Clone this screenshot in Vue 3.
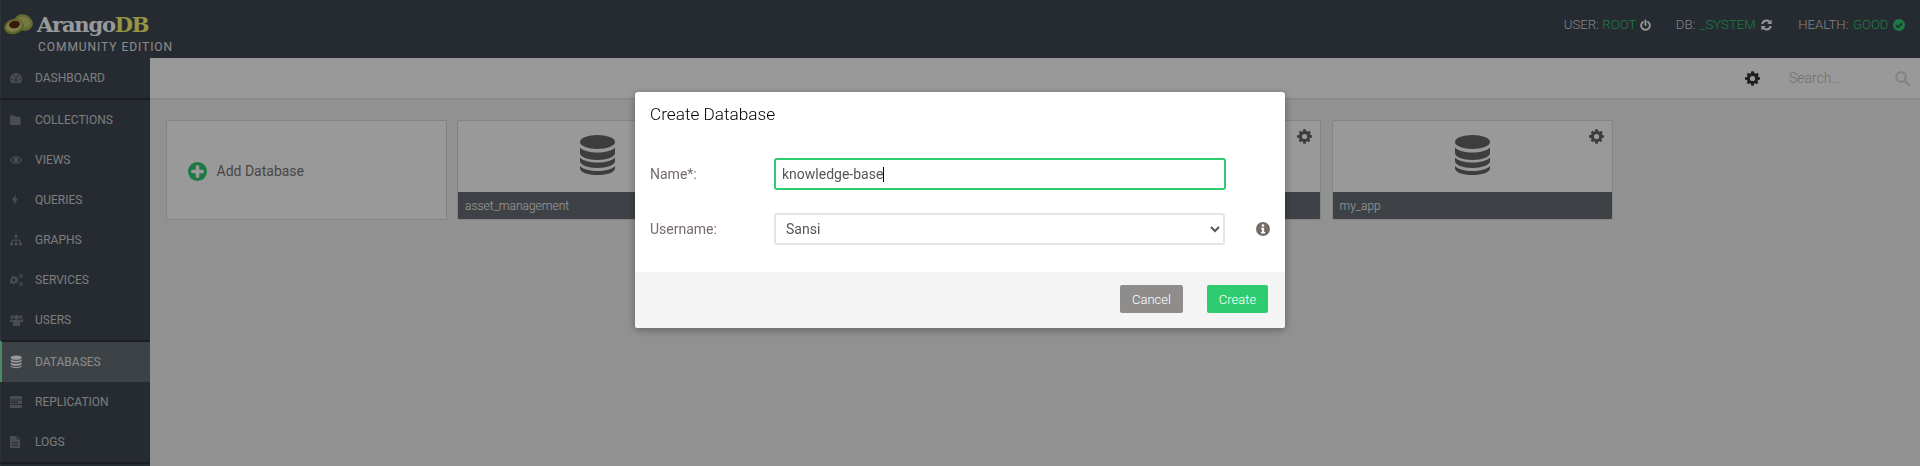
<script setup>
import { ref } from 'vue';

const menuTop = [
  { label: 'COLLECTIONS', icon: 'folder' },
  { label: 'VIEWS', icon: 'eye' },
  { label: 'QUERIES', icon: 'bolt' },
  { label: 'GRAPHS', icon: 'sitemap' },
  { label: 'SERVICES', icon: 'cogs' },
  { label: 'USERS', icon: 'users' },
];

const menuBottom = [
  { label: 'REPLICATION', icon: 'server' },
  { label: 'LOGS', icon: 'file' },
];

// only the first and last names can be read, the others sit behind the modal
const databases = ['asset_management', '', '', 'my_app'];

const dbName = ref('knowledge-base');
const username = ref('Sansi');

const gearPath = 'M14.3 8.9l-1.5-.3c-.1-.4-.3-.8-.5-1.2l.9-1.3-1.6-1.6-1.3.9c-.4-.2-.8-.4-1.2-.5L8.3 3H6l-.3 1.9c-.4.1-.8.3-1.2.5l-1.3-.9-1.6 1.6.9 1.3c-.2.4-.4.8-.5 1.2L0 8.9v2.2l2 .3c.1.4.3.8.5 1.2l-.9 1.3 1.6 1.6 1.3-.9c.4.2.8.4 1.2.5L6 17h2.3l.3-1.9c.4-.1.8-.3 1.2-.5l1.3.9 1.6-1.6-.9-1.3c.2-.4.4-.8.5-1.2l1.9-.3V8.9zM7.2 12.5a2.5 2.5 0 1 1 0-5 2.5 2.5 0 0 1 0 5z';
</script>

<template>
  <div class="app">
    <header class="topbar">
      <div class="brand">
        <svg class="avocado" viewBox="0 0 30 22" width="30" height="22">
          <ellipse cx="19.5" cy="9.5" rx="9.5" ry="8" fill="#a8b44e" transform="rotate(25 19.5 9.5)" />
          <ellipse cx="20" cy="9" rx="6.5" ry="5" fill="#c8cc74" transform="rotate(25 20 9)" />
          <ellipse cx="10" cy="13.5" rx="10" ry="7.5" fill="#9aa846" transform="rotate(-15 10 13.5)" />
          <ellipse cx="10" cy="13" rx="8" ry="5.5" fill="#d4d880" transform="rotate(-15 10 13)" />
          <ellipse cx="10.5" cy="11.5" rx="5.5" ry="3.8" fill="#5e2c12" transform="rotate(-10 10.5 11.5)" />
        </svg>
        <div class="brand-text">
          <div class="wordmark">Arango<span class="wordmark-db">DB</span></div>
          <div class="edition">COMMUNITY EDITION</div>
        </div>
      </div>
      <div class="status">
        <div class="status-item status-user">
          <span>USER:</span><span class="good">ROOT</span>
          <svg width="11" height="12" viewBox="0 0 12 12" fill="none" stroke="#fff" stroke-width="2" stroke-linecap="round">
            <path d="M3.2 2.6a4.8 4.8 0 1 0 5.6 0" />
            <path d="M6 1v5" />
          </svg>
        </div>
        <div class="status-item">
          <span>DB:</span><span class="good">_SYSTEM</span>
          <svg width="13" height="12" viewBox="0 0 13 12" fill="#fff">
            <path d="M1.2 5a5.4 5.4 0 0 1 9-3.1L11.6.6V5H7.2l1.6-1.6A3.5 3.5 0 0 0 3.2 5z" />
            <path d="M11.8 7a5.4 5.4 0 0 1-9 3.1L1.4 11.4V7h4.4L4.2 8.6A3.5 3.5 0 0 0 9.8 7z" />
          </svg>
        </div>
        <div class="status-item">
          <span>HEALTH:</span><span class="good">GOOD</span>
          <svg width="12" height="12" viewBox="0 0 12 12">
            <circle cx="6" cy="6" r="6" fill="#2ecc71" />
            <path d="M3 6.2l2.1 2.1L9 4.3" fill="none" stroke="#404a53" stroke-width="1.8" />
          </svg>
        </div>
      </div>
    </header>

    <div class="main">
      <nav class="sidebar">
        <a class="nav-item nav-first">
          <svg class="nav-icon" viewBox="0 0 14 14" fill="currentColor">
            <path transform="translate(0 2) scale(.86)" d="M7 0a7 7 0 0 0-7 7c0 1.800.6 3.400 1.600 4.500h10.800A6.900 6.900 0 0 0 14 7a7 7 0 0 0-7-7zM2.500 8a1 1 0 1 1 0-2 1 1 0 0 1 0 2zm2-3.500a1 1 0 1 1 0-2 1 1 0 0 1 0 2zM7 10a1.500 1.500 0 0 1-.6-2.900L6.900 3h.6l.3 4.200A1.500 1.500 0 0 1 7 10zm2.500-5.500a1 1 0 1 1 0-2 1 1 0 0 1 0 2zm2 3.500a1 1 0 1 1 0-2 1 1 0 0 1 0 2z" />
          </svg>
          <span>DASHBOARD</span>
        </a>
        <a v-for="item in menuTop" :key="item.label" class="nav-item">
          <svg v-if="item.icon === 'folder'" class="nav-icon" viewBox="0 0 14 14" fill="currentColor">
            <path transform="translate(0 1.5) scale(.82 .88)" d="M1 1h4l1.500 1.500H12a1 1 0 0 1 1 1V11a1 1 0 0 1-1 1H1a1 1 0 0 1-1-1V2a1 1 0 0 1 1-1z" />
          </svg>
          <svg v-else-if="item.icon === 'eye'" class="nav-icon" viewBox="0 0 14 14" fill="none" stroke="currentColor">
            <g transform="translate(0 1.8) scale(.86)">
              <path stroke-width="1.2" d="M.7 6C2.200 3.500 4.400 2.200 7 2.200S11.800 3.500 13.300 6C11.800 8.500 9.600 9.800 7 9.800S2.200 8.500.7 6z" />
              <circle cx="7" cy="6" r="2.800" fill="currentColor" stroke="none" />
            </g>
          </svg>
          <svg v-else-if="item.icon === 'bolt'" class="nav-icon" viewBox="0 0 14 14" fill="currentColor">
            <path transform="translate(-1.8 1)" d="M7.500 0L3.800 6.400h2.400L5 12l4.800-7.600H7.200z" />
          </svg>
          <svg v-else-if="item.icon === 'sitemap'" class="nav-icon" viewBox="0 0 14 14" fill="currentColor">
            <path transform="translate(0 1.500) scale(.86 1)" d="M5.500 0h3v3H7.500v2.200h4.700v2.800H14v3h-3.500V8h.7V6.200H7.500V8h1v3h-3V8h1V6.200H2.800V8h.7v3H0V8h1.800V5.200h4.700V3h-1z" />
          </svg>
          <svg v-else-if="item.icon === 'cogs'" class="nav-icon" viewBox="0 0 14 14" fill="currentColor">
            <g transform="translate(0 1)">
              <path d="M4.500 2.500l1 .4.800-.6 1 1-.5.8.4 1 1 .2v1.400l-1 .2-.4 1 .5.800-1 1-.8-.6-1 .4-.2 1H3l-.2-1-1-.4-.8.6-1-1 .5-.8-.4-1L0 6.700V5.300l1-.2.4-1L1 3.300l1-1 .8.6 1-.4L3 1.500h1.300zM3.700 4.400a1.600 1.600 0 1 0 0 3.200 1.600 1.600 0 0 0 0-3.200z" fill-rule="evenodd" />
              <path fill-rule="evenodd" d="M11 0a1.900 1.900 0 1 1 0 3.800 1.900 1.900 0 0 1 0-3.800zm0 1.100a.8.8 0 1 0 0 1.600.8.8 0 0 0 0-1.600zM11 8a1.900 1.900 0 1 1 0 3.800 1.900 1.900 0 0 1 0-3.800zm0 1.100a.8.8 0 1 0 0 1.600.8.8 0 0 0 0-1.600z" />
            </g>
          </svg>
          <svg v-else-if="item.icon === 'users'" class="nav-icon" viewBox="0 0 14 14" fill="currentColor">
            <g transform="translate(0 1) scale(.94 1)">
              <circle cx="2.500" cy="3" r="1.800" />
              <circle cx="11.500" cy="3" r="1.800" />
              <circle cx="7" cy="3.200" r="2.500" />
              <path d="M0 5.500h3.200c-.4.800-.6 1.400-.6 2.500H0zM14 5.500h-3.200c.4.800.6 1.400.6 2.500H14zM4 6h6a1 1 0 0 1 1 1v3.500a1.500 1.500 0 0 1-1.500 1.500h-5A1.500 1.500 0 0 1 3 10.500V7a1 1 0 0 1 1-1z" />
            </g>
          </svg>
          <span>{{ item.label }}</span>
        </a>
        <a class="nav-item nav-active">
          <svg class="nav-icon" viewBox="0 0 14 14" fill="currentColor">
            <g transform="translate(-.3 .6) scale(1.08 1.05)">
              <ellipse cx="6" cy="2" rx="5" ry="2" />
              <path d="M1 3.400c1 1 3 1.400 5 1.400s4-.4 5-1.400V5c0 1-2.200 1.800-5 1.800S1 6 1 5zM1 6.400c1 1 3 1.400 5 1.400s4-.4 5-1.400V8c0 1-2.200 1.800-5 1.800S1 9 1 8zM1 9.400c1 1 3 1.400 5 1.400s4-.4 5-1.400v.8c0 1-2.200 1.800-5 1.800s-5-.8-5-1.800z" />
            </g>
          </svg>
          <span>DATABASES</span>
        </a>
        <a v-for="item in menuBottom" :key="item.label" class="nav-item" :class="{ 'nav-last': item.icon === 'file' }">
          <svg v-if="item.icon === 'server'" class="nav-icon" viewBox="0 0 14 14" fill="currentColor">
            <path transform="translate(0 1) scale(.86 1)" fill-rule="evenodd" d="M0 0h14v3.400H0zM0 4.500h14v3.400H0zM0 9h14v3H0zM1 5.500v1.400h8V5.500z" />
          </svg>
          <svg v-else class="nav-icon" viewBox="0 0 14 14" fill="currentColor">
            <path transform="translate(-1 1)" fill-rule="evenodd" d="M1 0h6.500v3.500H11V12H1zM8.500 0L11 2.500H8.500zM3 6v1h6V6zM3 8.500v1h6v-1z" />
          </svg>
          <span>{{ item.label }}</span>
        </a>
      </nav>

      <main class="content">
        <div class="subbar">
          <svg class="subbar-gear" width="15" height="15" viewBox="0 2.900 14.300 14.200" fill="currentColor">
            <path fill-rule="evenodd" :d="gearPath" />
          </svg>
          <span class="search-text">Search...</span>
          <svg class="search-icon" width="15" height="15" viewBox="0 0 15 15" fill="none" stroke="currentColor" stroke-width="2.200">
            <circle cx="6" cy="6" r="4.800" />
            <path d="M9.500 9.500l4.500 4.500" stroke-linecap="round" stroke-width="2.600" />
          </svg>
        </div>

        <div class="cards">
          <div class="card add-card">
            <svg width="19" height="19" viewBox="0 0 18 18">
              <circle cx="9" cy="9" r="9" fill="#2ecc71" />
              <path d="M9 4.500v9M4.500 9h9" stroke="#fff" stroke-width="3.400" stroke-linecap="round" />
            </svg>
            <span>Add Database</span>
          </div>
          <div v-for="(name, i) in databases" :key="i" class="card db-card">
            <svg class="card-gear" width="15" height="15" viewBox="0 2.900 14.300 14.200" fill="currentColor">
              <path fill-rule="evenodd" :d="gearPath" />
            </svg>
            <div class="card-body">
              <svg width="35" height="40" viewBox="0 0 35 40" fill="currentColor">
                <ellipse cx="17.500" cy="7" rx="17.500" ry="7" />
                <path d="M0 12.500c3 3.500 10 5 17.500 5s14.500-1.500 17.500-5V18c0 3.800-7.800 7-17.500 7S0 21.800 0 18zM0 22.500c3 3.500 10 5 17.500 5s14.500-1.500 17.500-5V26c0 3.800-7.800 7-17.500 7S0 29.800 0 26zM0 31c3 3.500 10 5 17.500 5S32 34.500 35 31v2.500c0 3.800-7.800 6.500-17.500 6.500S0 37.300 0 33.500z" />
              </svg>
            </div>
            <div class="card-footer">{{ name }}</div>
          </div>
        </div>
      </main>
    </div>

    <div class="backdrop"></div>

    <div class="modal">
      <h3 class="modal-title">Create Database</h3>
      <div class="modal-body">
        <div class="form-row">
          <label class="form-label">Name*:</label>
          <div class="name-field">
            <span class="name-value">{{ dbName }}</span><span class="caret"></span>
          </div>
        </div>
        <div class="form-row">
          <label class="form-label">Username:</label>
          <select v-model="username" class="form-select">
            <option>Sansi</option>
            <option>root</option>
          </select>
          <svg class="info-icon" width="14" height="14" viewBox="0 0 14 14">
            <circle cx="7" cy="7" r="7" fill="currentColor" />
            <rect x="5.800" y="2.400" width="2.400" height="2.200" fill="#fff" />
            <path d="M5.200 5.800h3v4.200h.9v1.400H5V10h.9V7.200h-.7z" fill="#fff" />
          </svg>
        </div>
      </div>
      <div class="modal-footer">
        <button class="btn btn-cancel">Cancel</button>
        <button class="btn btn-create">Create</button>
      </div>
    </div>
  </div>
</template>

<style>
html,
body {
  margin: 0;
  height: 100%;
  overflow: hidden;
}
</style>

<style scoped>
.app {
  height: 466px;
  display: flex;
  flex-direction: column;
  overflow: hidden;
  font-family: Roboto, "Liberation Sans", sans-serif;
}

.topbar {
  height: 58px;
  flex: none;
  display: flex;
  justify-content: space-between;
  background: #404854;
  box-shadow: inset 1px 0 0 #4c5460;
  color: #ddd;
}

.brand {
  display: flex;
  padding: 13px 0 0 4px;
}

.avocado {
  margin-right: 3px;
}

.brand-text {
  margin-top: -1px;
}

.wordmark {
  font-family: "DejaVu Serif", serif;
  font-size: 21px;
  font-weight: 700;
  line-height: 26px;
  letter-spacing: -1.2px;
  color: #fff;
}

.wordmark-db {
  color: #f8f870;
}

.edition {
  font-size: 12px;
  line-height: 14px;
  margin: 2px 0 0 1px;
  letter-spacing: 0.95px;
  color: #e6e6e6;
}

.status {
  display: flex;
  gap: 25px;
  padding: 17px 15px 0 0;
  font-size: 13.2px;
  font-weight: 300;
  line-height: 16px;
}

.status-item {
  display: flex;
  align-items: center;
  height: 16px;
  gap: 4.5px;
}

.status-user {
  gap: 3.5px;
}

.good {
  color: #2ecc71;
}

.main {
  flex: 1;
  display: flex;
  min-height: 0;
}

.sidebar {
  width: 150px;
  flex: none;
  background: #404854;
  box-shadow: inset 1px 0 0 #4c5460;
  color: #d0d0d0;
  display: flex;
  flex-direction: column;
}

.nav-item {
  height: 40px;
  flex: none;
  display: flex;
  align-items: center;
  gap: 11px;
  padding-left: 10px;
  font-size: 12px;
  font-weight: 400;
}

.nav-icon {
  width: 14px;
  height: 14px;
  flex: none;
  color: #7c8189;
}

.nav-first,
.nav-last {
  height: 42px;
  box-sizing: border-box;
  border-bottom: 2px solid #2d323a;
}

.nav-active {
  height: 42px;
  box-sizing: border-box;
  padding-left: 8px;
  border-top: 2px solid #2d323a;
  border-left: 2px solid #7ee8a8;
  background: #676f75;
  color: #e6e6e6;
}

.nav-active .nav-icon {
  color: #fff;
}

.content {
  flex: 1;
  min-width: 0;
  background: #f2f2f2;
}

.subbar {
  height: 40px;
  display: flex;
  align-items: center;
  background: #fff;
  border-bottom: 2px solid #e6e6e6;
  color: #333;
}

.subbar-gear {
  margin-left: auto;
  margin-right: 29px;
}

.search-text {
  width: 106px;
  font-size: 14px;
  font-weight: 300;
  color: #bbb;
}

.search-icon {
  color: #dcdcdc;
  margin-right: 10px;
}

.cards {
  display: flex;
  gap: 10.5px;
  padding: 20px 0 0 15.5px;
}

.card {
  width: 281px;
  height: 100px;
  box-sizing: border-box;
  border: 1px solid #dcdcdc;
  background: #fff;
  flex: none;
  position: relative;
}

.add-card {
  display: flex;
  align-items: center;
  gap: 10px;
  padding: 2px 0 0 21px;
  font-size: 14px;
  color: #777;
}

.db-card {
  display: flex;
  flex-direction: column;
  border-radius: 2px;
  overflow: hidden;
  color: #666;
}

.card-gear {
  position: absolute;
  top: 8px;
  right: 8px;
  color: #666;
}

.card-body {
  flex: 1;
  display: flex;
  justify-content: center;
  padding-top: 14px;
}

.card-footer {
  height: 28px;
  margin: 0 -1px -1px;
  padding-left: 8px;
  background: #686f75;
  color: #fff;
  font-size: 12px;
  font-weight: 300;
  line-height: 28px;
}

.backdrop {
  position: fixed;
  inset: 0;
  background: rgba(0, 0, 0, 0.4);
}

.modal {
  position: fixed;
  top: 92px;
  left: 635px;
  width: 650px;
  height: 236px;
  display: flex;
  flex-direction: column;
  background: #fff;
  border-radius: 3px;
  box-shadow: 0 2px 8px rgba(0, 0, 0, 0.35);
  overflow: hidden;
}

.modal-title {
  margin: 0;
  padding: 12px 15px 0;
  height: 31px;
  font-size: 17.2px;
  font-weight: 300;
  line-height: 20px;
  color: #000;
}

.modal-body {
  flex: 1;
  display: flex;
  flex-direction: column;
  gap: 23px;
  padding: 23px 15px 0;
}

.form-row {
  display: flex;
  align-items: center;
}

.form-label {
  width: 124px;
  flex: none;
  font-size: 14px;
  font-weight: 400;
  color: #736b68;
}

.name-field {
  width: 452px;
  height: 32px;
  box-sizing: border-box;
  border: 2px solid #2ecc71;
  border-radius: 3px;
  padding-left: 6px;
  display: flex;
  align-items: center;
  font-size: 14px;
  color: #555;
}

.caret {
  width: 1px;
  height: 15px;
  background: #000;
}

.form-select {
  width: 452px;
  height: 32px;
  box-sizing: border-box;
  border: 2px solid #e5e5e5;
  border-radius: 3px;
  background: #fff;
  padding-left: 6px;
  font-family: inherit;
  font-size: 14px;
  color: #555;
}

.info-icon {
  margin-left: 31px;
  color: #736b68;
}

.modal-footer {
  height: 56px;
  flex: none;
  box-sizing: border-box;
  display: flex;
  justify-content: flex-end;
  align-items: center;
  gap: 24px;
  padding: 0 17px 2px 0;
  background: #f4f4f4;
}

.btn {
  height: 28px;
  border: 0;
  border-radius: 2px;
  padding: 0;
  color: #fff;
  font-family: inherit;
  font-size: 13px;
  font-weight: 300;
}

.btn-cancel {
  width: 63px;
  background: #8f8d8c;
}

.btn-create {
  width: 61px;
  background: #2ecc71;
}
</style>
